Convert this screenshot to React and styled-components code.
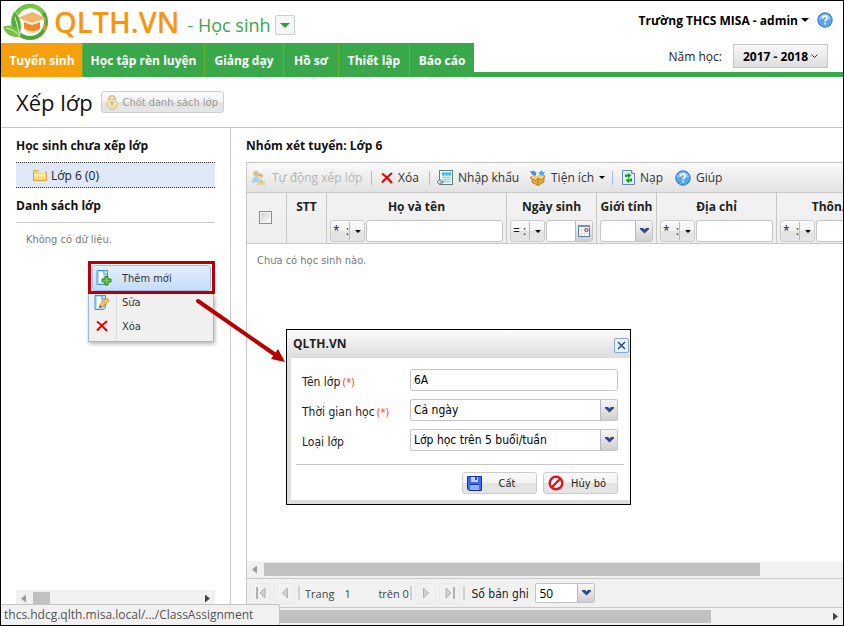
import React, { useState } from 'react'
import styled, { createGlobalStyle, css } from 'styled-components'

const SANS = '"Open Sans", "Noto Sans", sans-serif'
const TAHOMA = '"DejaVu Sans Condensed", "Noto Sans", sans-serif'

const GlobalStyle = createGlobalStyle`
  * { box-sizing: border-box; }
  html, body { margin: 0; padding: 0; }
  body { font-family: ${SANS}; font-size: 12px; color: #222; background: #fff; }
  button, input, select { font: inherit; color: inherit; margin: 0; }
  button { padding: 0; border: 0; background: none; cursor: pointer; }
`

/* ---------- icons ---------- */

const LogoIcon = () => (
  <svg width='46' height='38' viewBox='0 0 46 38' aria-hidden='true'>
    <circle cx='27' cy='19' r='16' fill='#fff' stroke='#4aa832' strokeWidth='4' />
    <path d='M14 11C20 1 34 1 40 10' fill='none' stroke='#7cc63f' strokeWidth='4' />
    <path d='M11 8C19 15 20 25 16 33C8 29 5 19 11 8Z' fill='#55ac3a' stroke='#e4f3dc' strokeWidth='.8' />
    <path d='M0 24C8 20 16 24 18 33C10 36 3 32 0 24Z' fill='#77bf45' />
    <path d='M12 14C14 21 15 26 17 32M3 25C9 26 13 29 17 33' stroke='#fff' strokeWidth='.8' fill='none' />
    <path d='M15 15L29 9L43 15L29 20Z' fill='#f5b36c' />
    <path d='M21 19V26C25 30 34 30 37 26V19L29 22Z' fill='#ee8b27' />
    <path d='M21 25C25 29 34 29 37 25V27C33 31 25 31 21 27Z' fill='#fbd9b2' />
    <path d='M42 15V23M41 23H43V27H41Z' stroke='#ef9a3a' strokeWidth='1' fill='#ef9a3a' />
  </svg>
)

const DownIcon = ({ size = 6, color = '#000' }) => (
  <svg width={size} height={size / 2} viewBox='0 0 6 3' aria-hidden='true'>
    <path d='M0 0H6L3 3Z' fill={color} />
  </svg>
)

const ChevronIcon = () => (
  <svg width='9' height='6' viewBox='0 0 9 6' aria-hidden='true'>
    <path d='M0 0H3L4.5 1.5L6 0H9V1.200L4.5 5.500L0 1.200Z' fill='#2c4a86' />
  </svg>
)

const HelpIcon = () => (
  <svg width='16' height='16' viewBox='0 0 16 16' aria-hidden='true'>
    <circle cx='8' cy='8' r='7.2' fill='#5aa5ee' stroke='#2f74c4' />
    <path d='M2 8A6 6 0 0 1 14 8Q8 5 2 8Z' fill='#8dc3f5' />
    <path d='M5.6 6.2C5.6 3.2 10.4 3.2 10.4 6C10.4 7.7 8 7.8 8 9.4M8 10.8V12.4' fill='none' stroke='#fff' strokeWidth='1.6' />
  </svg>
)

const LockIcon = () => (
  <svg width='12' height='16' viewBox='0 0 12 16' aria-hidden='true'>
    <path d='M3 8V4.5C3 1 9 1 9 4.5V8' fill='none' stroke='#d9c68e' strokeWidth='2' />
    <circle cx='6' cy='10' r='5.2' fill='#f0e2b6' stroke='#d6c084' />
    <path d='M6 8V12' stroke='#cdb470' strokeWidth='1.3' />
    <circle cx='6' cy='8.5' r='1.3' fill='#cdb470' />
  </svg>
)

const FolderIcon = () => (
  <svg width='14' height='12' viewBox='0 0 14 12' aria-hidden='true'>
    <path d='M.5 1.5H5L6.5 3H13.5V11.5H.5Z' fill='#f5d06e' stroke='#dca53c' />
    <path d='M1 5H13V11H1Z' fill='#fdecaa' />
    <path d='M1 7.5H13V11H1Z' fill='#f8d878' />
    <path d='M5 2.5H12V4H7Z' fill='#fff7d8' />
  </svg>
)

const CrossIcon = () => (
  <svg width='12' height='12' viewBox='0 0 12 12' aria-hidden='true'>
    <path d='M1 1.500Q6 5 11 11M11 1Q6 5 1 10.5' fill='none' stroke='#e00000' strokeWidth='2' />
  </svg>
)

const UsersIcon = () => (
  <svg width='16' height='16' viewBox='0 0 16 16' aria-hidden='true' opacity='.6'>
    <circle cx='5' cy='3.5' r='2.8' fill='#b9a05c' />
    <path d='M1 13C1 4 9 4 9 12Z' fill='#8fb9dc' />
    <circle cx='9.5' cy='6.5' r='2.6' fill='#ecc98a' />
    <path d='M7 6C7 2.500 12 3 12 6.500Z' fill='#ae8f48' />
    <path d='M6 15C6 8.500 14 8.500 15 15Z' fill='#ddc963' />
    <path d='M9 10L10.5 14L12 10Z' fill='#7fb0dd' />
  </svg>
)

const ImportIcon = () => (
  <svg width='16' height='16' viewBox='0 0 16 16' aria-hidden='true'>
    <rect x='2.5' y='.5' width='13' height='14' fill='#eef4f4' stroke='#5e7f84' />
    <rect x='5' y='2.5' width='9' height='3' fill='#35b5e8' />
    <path d='M5 7.5H14M5 9.5H14M5 11.5H14M8 3V13M11 3V13' stroke='#9fd3e6' />
    <path d='M6 11H3V9L0 12L3 15V13H6Z' fill='#d6e0e0' stroke='#53757a' strokeWidth='.8' />
  </svg>
)

const BoxIcon = () => (
  <svg width='17' height='16' viewBox='0 0 17 16' aria-hidden='true'>
    <path d='M3 6L9 8L15 5V12L9 15.5L3 12.5Z' fill='#e5a93d' stroke='#a8701a' strokeWidth='.7' />
    <path d='M9 8V15.5M3 6L1 8L7 10.5L9 8L12 10L16 7L15 5' fill='#f6cf70' stroke='#a8701a' strokeWidth='.7' />
    <path d='M1 1.5L5 .8L7.5 3L6.5 6L3.5 5Z' fill='#3f93d8' />
    <path d='M12.5 0L13.5 2L16 2L14.5 4L15 6L12.5 5L10.5 6V3.6L9 2L11.5 2Z' fill='#4da3e4' />
  </svg>
)

const ReloadIcon = () => (
  <svg width='13' height='15' viewBox='0 0 13 15' aria-hidden='true'>
    <path d='M.5.5H9.5L12.5 3.5V14.5H.5Z' fill='#e3eefb' stroke='#6b87bd' />
    <path d='M9.5.5V3.5H12.5' fill='#fff' stroke='#6b87bd' />
    <path d='M3 7V4.500H6V3L9.500 5.500L6 8V6.500H5V7Z' fill='#0d9c0d' />
    <path d='M10 8.500V11.500H7V13L3.500 10.500L7 8V9.500H8V8.500Z' fill='#0d9c0d' />
  </svg>
)

const PageShape = () => (
  <>
    <path d='M1 .5H11.5V12L9.5 14.5H1Z' fill='#b9ddf6' stroke='#3d97d6' />
    <path d='M3 2H7V13H3Z' fill='#fff' />
    <path d='M8 .5V4H11.5' fill='#fff' stroke='#3d97d6' />
  </>
)

const AddPageIcon = () => (
  <svg width='16' height='16' viewBox='0 0 16 16' aria-hidden='true'>
    <PageShape />
    <path d='M9 6.5H12V9H15V12H12V15H9V12H6V9H9Z' fill='#6cc94a' stroke='#2c7d1d' />
  </svg>
)

const EditPageIcon = () => (
  <svg width='16' height='16' viewBox='0 0 16 16' aria-hidden='true'>
    <PageShape />
    <path d='M6 9.5L12.5 3L15 5.5L8.5 12L5.5 12.5Z' fill='#fbc843' stroke='#b9822c' strokeWidth='.8' />
    <path d='M5.5 12.5L6 10.5L7.7 12Z' fill='#333' />
  </svg>
)

const SaveIcon = () => (
  <svg width='15' height='15' viewBox='0 0 15 15' aria-hidden='true'>
    <path d='M.5.5H14.5V14.5H2L.5 13Z' fill='#3d6cf2' stroke='#1530a5' />
    <rect x='4' y='1' width='7' height='5' fill='#c3d2ff' />
    <rect x='8' y='1' width='2' height='3' fill='#2b4fd0' />
    <rect x='3' y='8' width='9' height='6' fill='#8fb0ff' />
    <rect x='3' y='8' width='9' height='1' fill='#1a2f90' />
  </svg>
)

const BanIcon = () => (
  <svg width='16' height='16' viewBox='0 0 16 16' aria-hidden='true'>
    <circle cx='8' cy='8' r='6.3' fill='#fff' stroke='#e3131b' strokeWidth='2.4' />
    <path d='M3.5 12.5L12.5 3.5' stroke='#e3131b' strokeWidth='2.4' />
  </svg>
)

const CalendarIcon = () => (
  <svg width='12' height='12' viewBox='0 0 12 12' aria-hidden='true'>
    <rect x='.5' y='.5' width='11' height='11' fill='#fff' stroke='#5a7cac' />
    <path d='M0 0H12V2H0Z' fill='#6f93c0' />
    <path d='M1 5.5H11M1 8.5H11M3.5 3V11M6.5 3V11' stroke='#d8dfe8' />
    <circle cx='8.5' cy='5' r='1.6' fill='#fff' stroke='#a51414' />
  </svg>
)

const PageIcon = ({ bar, next }) => (
  <svg width='12' height='12' viewBox='0 0 12 12' aria-hidden='true'>
    <g transform={next ? 'matrix(-1 0 0 1 12 0)' : undefined} fill='#d2d2d2' stroke='#b0b0b0'>
      {bar && <rect x='1.5' y='.5' width='1' height='11' />}
      <path d={bar ? 'M10 1V11L5 6Z' : 'M8.500 1V11L3.500 6Z'} />
    </g>
  </svg>
)

/* ---------- frame and header ---------- */

const Frame = styled.div`
  position: relative;
  display: flex;
  flex-direction: column;
  min-height: 100vh;
  border: 1px solid #000;
  overflow: hidden;
`

const Header = styled.header`
  display: flex;
  justify-content: space-between;
  border-bottom: 5px solid #39a84a;
  height: 76px;
`

const Brand = styled.div`
  display: flex;
  align-items: center;
  height: 42px;
  padding-left: 2px;
`

const BrandName = styled.span`
  margin-left: 5px;
  font-size: 29px;
  font-weight: 600;
  line-height: 42px;
  color: #f7960b;
`

const BrandSub = styled.span`
  margin: 6px 4px 0 8px;
  font-size: 18px;
  color: #39a84a;
`

const SmallDrop = styled.button`
  display: grid;
  place-items: center;
  width: 20px;
  height: 20px;
  margin-top: 6px;
  border: 1px solid #ccc;
  border-radius: 2px;
  background: #f6f6f6;
`

const Nav = styled.nav`
  display: flex;
  height: 34px;
`

const Tab = styled.a`
  width: ${p => p.$w}px;
  line-height: 35px;
  text-align: center;
  font-weight: 700;
  white-space: nowrap;
  text-decoration: none;
  color: #fff;
  background: ${p => (p.$active ? '#f6a00d' : '#39a84a')};
  border-left: 1px solid ${p => (p.$active ? '#f6a00d' : '#65b32e')};
`

const Account = styled.div`
  display: flex;
  flex-direction: column;
  align-items: flex-end;
  padding: 10px 10px 0 0;
`

const UserRow = styled.div`
  display: flex;
  align-items: center;
  gap: 8px;
  height: 18px;
`

const UserButton = styled.button`
  display: flex;
  align-items: center;
  gap: 3px;
  font-weight: 700;
  color: #000;
`

const YearRow = styled.div`
  display: flex;
  align-items: center;
  gap: 11px;
  margin: 15px 5px 0 0;
`

const YearButton = styled.button`
  display: flex;
  align-items: center;
  justify-content: center;
  gap: 3px;
  width: 95px;
  height: 24px;
  border: 1px solid #c6c6c6;
  background: linear-gradient(#f8f8f8, #dedede);
  font-weight: 700;
  color: #000;
`

const TitleBar = styled.div`
  display: flex;
  align-items: center;
  gap: 8px;
  height: 51px;
  padding-left: 15px;
  border-bottom: 1px solid #c8c8c8;
`

const PageTitle = styled.h1`
  margin: 0;
  font-size: 22px;
  font-weight: 400;
  color: #111;
`

const softButton = css`
  border: 1px solid #ccc;
  border-radius: 3px;
  background: linear-gradient(#fafafa 0%, #f3f3f3 50%, #e2e2e2 51%, #e6e6e6 100%);
`

const LockButton = styled.button`
  ${softButton}
  display: flex;
  align-items: center;
  justify-content: center;
  gap: 4px;
  width: 123px;
  height: 22px;
  font-family: ${TAHOMA};
  font-size: 11px;
  white-space: nowrap;
  color: #999;
`

/* ---------- columns ---------- */

const Columns = styled.div`
  display: flex;
  flex: 1;
`

const Sidebar = styled.aside`
  display: flex;
  flex-direction: column;
  width: 230px;
  flex: none;
  padding: 0 15px;
  border-right: 1px solid #c8c8c8;
`

const Heading = styled.h2`
  margin: 0;
  height: 34px;
  line-height: 36px;
  font-size: 12px;
  font-weight: 700;
  color: #111;
`

const TreeItem = styled.button`
  display: flex;
  align-items: center;
  gap: 4px;
  width: 100%;
  height: 26px;
  padding-left: 17px;
  border: dotted #333;
  border-width: 1px 0;
  background: #dfe8f6;
`

const ListHeading = styled(Heading)`
  height: 35px;
  border-bottom: 1px solid #c8c8c8;
`

const Empty = styled.p`
  margin: 0;
  padding: 0 10px;
  line-height: 34px;
  font-family: ${TAHOMA};
  font-size: 11px;
  color: #777;
`

const Main = styled.main`
  display: flex;
  flex-direction: column;
  flex: 1;
  min-width: 0;
  padding-left: 15px;
`

const Panel = styled.section`
  display: flex;
  flex-direction: column;
  flex: 1;
  min-width: 0;
  border-left: 1px solid #c8c8c8;
  border-top: 1px solid #c8c8c8;
  overflow: hidden;
`

const Toolbar = styled.div`
  display: flex;
  align-items: center;
  height: 30px;
  padding-left: 4px;
  border-bottom: 1px solid #c8c8c8;
  background: linear-gradient(#fafafa, #e2e2e2);
`

const ToolButton = styled.button`
  display: flex;
  align-items: center;
  gap: 5px;
  width: ${p => p.$w}px;
  height: 24px;
  white-space: nowrap;
  color: ${p => (p.disabled ? '#b5b5b5' : '#333')};
`

const ToolDivider = styled.span`
  width: 1px;
  height: 14px;
  margin-right: ${p => p.$gap || 9}px;
  background: #98c0f4;
`

const Grid = styled.table`
  width: 650px;
  table-layout: fixed;
  border-collapse: separate;
  border-spacing: 0;
`

const Th = styled.th`
  width: ${p => p.$w}px;
  height: 51px;
  padding: 0;
  vertical-align: ${p => (p.$middle ? 'middle' : 'top')};
  font-weight: 700;
  white-space: nowrap;
  background: linear-gradient(#f2f2f2, #eeeeee);
  border-right: 1px solid #c8c8c8;
  border-bottom: 1px solid #c8c8c8;
`

const ThLabel = styled.div`
  height: 27px;
  line-height: 28px;
`

const Filter = styled.div`
  display: flex;
  gap: 1px;
  height: 22px;
  margin: 0 3px;
  font-weight: 400;
`

const Operator = styled.button`
  ${softButton}
  display: flex;
  align-items: center;
  flex: none;
  width: 35px;
  padding-left: 2px;
  line-height: 18px;

  span {
    width: 17px;
    text-align: left;
    white-space: pre;
    border-right: 1px solid #bbb;
  }
  svg { margin-left: 5px; }
`

const FilterBox = styled.div`
  display: flex;
  flex: 1;
  min-width: 0;
  border: 1px solid #c4c4c4;
  border-radius: 3px;
  background: #fff;
  overflow: hidden;

  input {
    flex: 1;
    min-width: 0;
    border: 0;
    outline: 0;
    background: none;
  }
`

const trigger = css`
  display: grid;
  place-items: center;
  width: 17px;
  border-left: 1px solid #b5b8c8;
  background: linear-gradient(#f6f6f6, #cfcfcf);
`

const FilterTrigger = styled.button`
  ${trigger}
`

const CheckBox = styled.input`
  appearance: none;
  display: block;
  width: 13px;
  height: 13px;
  margin: 0 13px 2px 12px;
  border: 1px solid #8e8f8f;
  background: linear-gradient(135deg, #cbcfd5, #fff);
  box-shadow: inset 0 0 0 1px #f4f4f4;
`

const GridBody = styled.div`
  flex: 1;
`

const Track = styled.div`
  display: flex;
  align-items: center;
  height: 17px;
  padding: 0 5px;
  background: #f1f1f1;
`

const Thumb = styled.span`
  width: ${p => p.$w};
  height: 13px;
  margin-left: ${p => p.$gap || 7}px;
  background: #c1c1c1;
`

const Arrow = styled.button`
  flex: none;
  width: 5px;
  height: 8px;
  margin-left: ${p => (p.$right ? 'auto' : '0')};
  clip-path: ${p => (p.$right ? 'polygon(0 0, 100% 50%, 0 100%)' : 'polygon(100% 0, 0 50%, 100% 100%)')};
  background: ${p => (p.$right ? '#444' : '#999')};
`

const Pager = styled.div`
  display: flex;
  align-items: center;
  height: 29px;
  padding-left: 3px;
  font-size: 11px;
  color: #444;
  background: #f1f1f1;
  border-top: 1px solid #c8c8c8;
`

const PagerButton = styled.button`
  display: grid;
  place-items: center;
  width: 21px;
  height: 21px;
  margin-right: 3px;
  border: 1px solid #e9e9e9;
  border-radius: 3px;
`

const PagerDivider = styled.span`
  width: 2px;
  height: 14px;
  margin-right: ${p => p.$gap}px;
  background: #d0d0d0;
`

const PageInput = styled.input`
  width: 34px;
  margin-left: 10px;
  padding: 0;
  border: 0;
  outline: 0;
  background: none;
`

const PagerText = styled.span`
  width: ${p => p.$w}px;
  white-space: nowrap;
`

const SizeLabel = styled.label`
  width: 64px;
  padding-top: 2px;
  font-family: ${TAHOMA};
  font-size: 12px;
  color: #222;
`

const ComboBox = styled.div`
  display: grid;
  width: ${p => p.$w || '100%'};
  height: ${p => (p.$w ? 20 : 22)}px;
  border: 1px solid #c4c4c4;
  border-radius: 2px;
  background: #fff;

  select, span { grid-area: 1 / 1; }
  select {
    appearance: none;
    width: 100%;
    padding: 0 18px 0 3px;
    border: 0;
    outline: 0;
    background: none;
    color: #000;
    font-size: 12px;
  }
  span {
    ${trigger}
    justify-self: end;
    pointer-events: none;
  }
`

const PageScroll = styled(Track)`
  height: 18px;
  border-top: 1px solid #c8c8c8;
`

const StatusBubble = styled.div`
  position: absolute;
  left: 0;
  bottom: 0;
  width: 279px;
  height: 21px;
  padding-left: 3px;
  line-height: 20px;
  white-space: nowrap;
  color: #555;
  background: #f1f1f1;
  border: solid #c4c4c4;
  border-width: 1px 1px 0 0;
  border-radius: 0 3px 0 0;
`

/* ---------- floating layers ---------- */

const Menu = styled.div`
  position: absolute;
  left: 87px;
  top: 260px;
  width: 127px;
  color: #333;
  font-family: ${TAHOMA};
  font-size: 11px;
`

const MenuFocus = styled.div`
  border: 3px solid #b90000;
  padding: 1px;
  height: 33px;
  background: #fff;
`

const MenuList = styled.div`
  display: flex;
  flex-direction: column;
  width: 126px;
  height: 48px;
  border: 1px solid #99bbe8;
  border-top: 0;
  background: linear-gradient(90deg, #f0f0f0 27px, #dcdcdc 27px, #dcdcdc 28px, #f0f0f0 28px);
  box-shadow: 1px 2px 4px rgba(0, 0, 0, .3);
`

const MenuItem = styled.button`
  display: flex;
  align-items: center;
  gap: ${p => (p.$active ? 10 : 12)}px;
  width: 100%;
  height: ${p => (p.$active ? '26px' : '24px')};
  padding-bottom: ${p => (p.$active ? 0 : 6)}px;
  padding-left: ${p => (p.$active ? 3 : 5)}px;
  ${p => p.$active && css`
    border: 1px solid #a3bae9;
    border-radius: 3px;
    background: linear-gradient(#e4effc, #c5dcf8);
  `}

  svg { width: 16px; flex: none; }
`

const Pointer = styled.svg`
  position: absolute;
  left: 190px;
  top: 293px;
`

const Dialog = styled.form`
  position: absolute;
  left: 285px;
  top: 328px;
  width: 345px;
  border: 1px solid #000;
  background: #fff;
  color: #222;
  font-family: ${TAHOMA};
  font-size: 12px;
`

const DialogHead = styled.div`
  display: flex;
  justify-content: space-between;
  align-items: center;
  height: 28px;
  padding: 0 1px 2px 6px;
  background: linear-gradient(#fcfcfc, #dcdcdc);
  font-family: ${SANS};
  font-weight: 700;
`

const CloseButton = styled.button`
  display: grid;
  place-items: center;
  width: 15px;
  height: 15px;
  margin-top: 4px;
  border: 1px solid #84a8dc;
  border-radius: 2px;
  background: #eaf2fd;
`

const DialogBody = styled.div`
  padding: 11px 6px 6px 5px;
  border: solid #dedede;
  border-width: 0 0 4px 4px;
`

const Field = styled.div`
  display: grid;
  grid-template-columns: 108px 1fr;
  align-items: center;
  height: 22px;
  margin: 0 6px 8px;

  label { padding-top: 3px; white-space: nowrap; }
  em { margin-left: 2px; font-size: 11px; font-style: normal; color: #f33; }
`

const TextInput = styled.input`
  width: 100%;
  height: 22px;
  padding: 0 3px;
  border: 1px solid #c4c4c4;
  border-radius: 3px;
  outline: 0;
  font-size: 12px;
  color: #000;
`

const Actions = styled.div`
  display: flex;
  justify-content: flex-end;
  gap: 6px;
  margin-top: 13px;
  padding: 7px 6px 0 0;
  border-top: 1px solid #c8c8c8;
`

const ActionButton = styled.button`
  ${softButton}
  display: flex;
  align-items: center;
  width: 75px;
  height: 22px;
  padding: 0 4px;
  font-size: 11px;

  span { flex: 1; text-align: center; }
`

const tabs = [
  { name: 'Tuyển sinh', w: 81 },
  { name: 'Học tập rèn luyện', w: 122 },
  { name: 'Giảng dạy', w: 79 },
  { name: 'Hồ sơ', w: 55 },
  { name: 'Thiết lập', w: 71 },
  { name: 'Báo cáo', w: 65 },
]

const Op = ({ sign = '*  :', label }) => (
  <Operator type='button' aria-label={`Điều kiện ${label}`}>
    <span>{sign}</span>
    <DownIcon />
  </Operator>
)

const TextFilter = ({ label }) => (
  <Filter>
    <Op label={label} />
    <FilterBox><input aria-label={label} /></FilterBox>
  </Filter>
)

const Combo = ({ w, options, ...rest }) => (
  <ComboBox $w={w}>
    <select {...rest}>
      {options.map(o => <option key={o}>{o}</option>)}
    </select>
    <span><ChevronIcon /></span>
  </ComboBox>
)

function TopHeader() {
  const [active, setActive] = useState('Tuyển sinh')

  return (
    <Header>
      <div>
        <Brand>
          <LogoIcon />
          <BrandName>QLTH.VN</BrandName>
          <BrandSub>- Học sinh</BrandSub>
          <SmallDrop type='button' aria-label='Chọn phân hệ'><DownIcon size={10} color='#2c9c3f' /></SmallDrop>
        </Brand>
        <Nav>
          {tabs.map(t => (
            <Tab key={t.name} href='#' $w={t.w} $active={t.name === active} onClick={() => setActive(t.name)}>
              {t.name}
            </Tab>
          ))}
        </Nav>
      </div>
      <Account>
        <UserRow>
          <UserButton type='button'>Trường THCS MISA - admin <DownIcon size={8} /></UserButton>
          <HelpIcon />
        </UserRow>
        <YearRow>
          <span>Năm học:</span>
          <YearButton type='button'>
            2017 - 2018
            <svg width='7' height='5' viewBox='0 0 7 5' aria-hidden='true'><path d='M.5.5L3.5 3.500L6.500.5' fill='none' stroke='#333' /></svg>
          </YearButton>
        </YearRow>
      </Account>
    </Header>
  )
}

function StudentGrid() {
  return (
    <Grid>
      <thead>
        <tr>
          <Th $w={40} $middle><CheckBox type='checkbox' aria-label='Chọn tất cả' /></Th>
          <Th $w={40}><ThLabel>STT</ThLabel></Th>
          <Th $w={180}><ThLabel>Họ và tên</ThLabel><TextFilter label='Họ và tên' /></Th>
          <Th $w={90}>
            <ThLabel>Ngày sinh</ThLabel>
            <Filter>
              <Op sign='= :' label='Ngày sinh' />
              <FilterBox>
                <input aria-label='Ngày sinh' />
                <FilterTrigger type='button' aria-label='Chọn ngày'><CalendarIcon /></FilterTrigger>
              </FilterBox>
            </Filter>
          </Th>
          <Th $w={60}>
            <ThLabel>Giới tính</ThLabel>
            <Filter>
              <FilterBox>
                <input aria-label='Giới tính' />
                <FilterTrigger type='button' aria-label='Chọn giới tính'><ChevronIcon /></FilterTrigger>
              </FilterBox>
            </Filter>
          </Th>
          <Th $w={120}><ThLabel>Địa chỉ</ThLabel><TextFilter label='Địa chỉ' /></Th>
          <Th $w={120}><ThLabel>Thôn/Tổ</ThLabel><TextFilter label='Thôn/Tổ' /></Th>
        </tr>
      </thead>
    </Grid>
  )
}

function ClassDialog() {
  const [name, setName] = useState('6A')

  return (
    <Dialog role='dialog' aria-label='QLTH.VN' onSubmit={e => e.preventDefault()}>
      <DialogHead>
        QLTH.VN
        <CloseButton type='button' aria-label='Đóng'>
          <svg width='9' height='9' viewBox='0 0 9 9' aria-hidden='true'><path d='M1 1L8 8M8 1L1 8' stroke='#2c4a86' strokeWidth='1.5' /></svg>
        </CloseButton>
      </DialogHead>
      <DialogBody>
        <Field>
          <label htmlFor='name'>Tên lớp<em>(*)</em></label>
          <TextInput id='name' value={name} onChange={e => setName(e.target.value)} />
        </Field>
        <Field>
          <label htmlFor='time'>Thời gian học<em>(*)</em></label>
          <Combo id='time' options={['Cả ngày']} />
        </Field>
        <Field>
          <label htmlFor='kind'>Loại lớp</label>
          <Combo id='kind' options={['Lớp học trên 5 buổi/tuần']} />
        </Field>
        <Actions>
          <ActionButton type='submit'><SaveIcon /><span>Cất</span></ActionButton>
          <ActionButton type='button'><BanIcon /><span>Hủy bỏ</span></ActionButton>
        </Actions>
      </DialogBody>
    </Dialog>
  )
}

function App() {
  return (
    <Frame>
      <GlobalStyle />
      <TopHeader />
      <TitleBar>
        <PageTitle>Xếp lớp</PageTitle>
        <LockButton type='button' disabled><LockIcon />Chốt danh sách lớp</LockButton>
      </TitleBar>

      <Columns>
        <Sidebar>
          <Heading>Học sinh chưa xếp lớp</Heading>
          <TreeItem type='button'><FolderIcon />Lớp 6 (0)</TreeItem>
          <ListHeading>Danh sách lớp</ListHeading>
          <Empty>Không có dữ liệu.</Empty>
          <Track style={{ marginTop: 'auto' }}>
            <Arrow aria-label='Cuộn trái' />
            <Thumb $w='17px' />
            <Arrow $right aria-label='Cuộn phải' />
          </Track>
        </Sidebar>

        <Main>
          <Heading>Nhóm xét tuyển: Lớp 6</Heading>
          <Panel>
            <Toolbar>
              <ToolButton $w={120} disabled><UsersIcon />Tự động xếp lớp</ToolButton>
              <ToolDivider />
              <ToolButton $w={48}><CrossIcon />Xóa</ToolButton>
              <ToolDivider $gap={7} />
              <ToolButton $w={92}><ImportIcon />Nhập khẩu</ToolButton>
              <ToolButton $w={83}><BoxIcon />Tiện ích<DownIcon /></ToolButton>
              <ToolDivider />
              <ToolButton $w={53}><ReloadIcon />Nạp</ToolButton>
              <ToolButton><HelpIcon />Giúp</ToolButton>
            </Toolbar>
            <StudentGrid />
            <GridBody><Empty>Chưa có học sinh nào.</Empty></GridBody>
            <Track>
              <Arrow aria-label='Cuộn trái' />
              <Thumb $w='496px' />
            </Track>
            <Pager>
              <PagerButton aria-label='Trang đầu'><PageIcon bar /></PagerButton>
              <PagerButton aria-label='Trang trước'><PageIcon /></PagerButton>
              <PagerDivider $gap={5} />
              <label htmlFor='page'>Trang</label>
              <PageInput id='page' defaultValue='1' />
              <PagerText $w={32}>trên 0</PagerText>
              <PagerDivider $gap={3} />
              <PagerButton aria-label='Trang sau'><PageIcon next /></PagerButton>
              <PagerButton aria-label='Trang cuối'><PageIcon bar next /></PagerButton>
              <PagerDivider $gap={6} />
              <SizeLabel htmlFor='size'>Số bản ghi</SizeLabel>
              <Combo id='size' w='60px' options={['50']} />
            </Pager>
          </Panel>
        </Main>
      </Columns>

      <PageScroll>
        <Thumb $w='84%' $gap={6} />
        <Arrow $right aria-label='Cuộn trang' />
      </PageScroll>
      <StatusBubble>thcs.hdcg.qlth.misa.local/.../ClassAssignment</StatusBubble>

      <Menu role='menu'>
        <MenuFocus>
          <MenuItem role='menuitem' $active><AddPageIcon />Thêm mới</MenuItem>
        </MenuFocus>
        <MenuList>
          <MenuItem role='menuitem'><EditPageIcon />Sửa</MenuItem>
          <MenuItem role='menuitem'><CrossIcon />Xóa</MenuItem>
        </MenuList>
      </Menu>

      <Pointer width='96' height='72' viewBox='0 0 96 72' aria-hidden='true'>
        <path d='M7 7L86 62' stroke='#b90000' strokeWidth='4' strokeLinecap='round' />
        <path d='M94 68L80 65L87 55Z' fill='#b90000' />
      </Pointer>

      <ClassDialog />
    </Frame>
  )
}

export default App
